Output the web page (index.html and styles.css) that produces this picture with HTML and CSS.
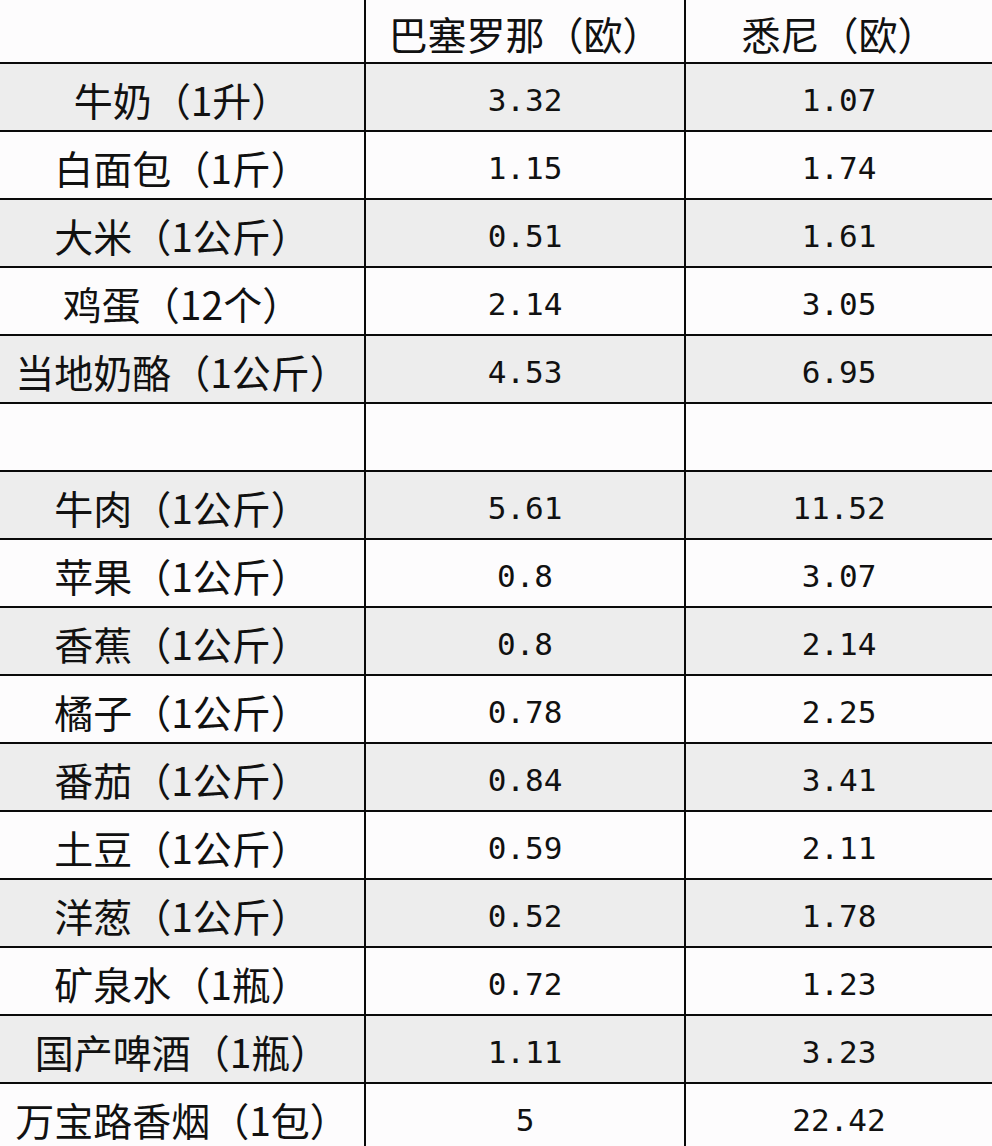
FILE: index.html
```html
<!DOCTYPE html>
<html lang="zh">
<head>
<meta charset="utf-8">
<link rel="stylesheet" href="styles.css">
<title>价格对比</title>
</head>
<body>
<div class="table">
  <div class="row head"><div class="cell c1"></div><div class="cell c2">巴塞罗那（欧）</div><div class="cell c3">悉尼（欧）</div></div>
  <div class="row gray"><div class="cell c1">牛奶（1升）</div><div class="cell c2 num">3.32</div><div class="cell c3 num">1.07</div></div>
  <div class="row"><div class="cell c1">白面包（1斤）</div><div class="cell c2 num">1.15</div><div class="cell c3 num">1.74</div></div>
  <div class="row gray"><div class="cell c1">大米（1公斤）</div><div class="cell c2 num">0.51</div><div class="cell c3 num">1.61</div></div>
  <div class="row"><div class="cell c1">鸡蛋（12个）</div><div class="cell c2 num">2.14</div><div class="cell c3 num">3.05</div></div>
  <div class="row gray"><div class="cell c1">当地奶酪（1公斤）</div><div class="cell c2 num">4.53</div><div class="cell c3 num">6.95</div></div>
  <div class="row"><div class="cell c1"></div><div class="cell c2 num"></div><div class="cell c3 num"></div></div>
  <div class="row gray"><div class="cell c1">牛肉（1公斤）</div><div class="cell c2 num">5.61</div><div class="cell c3 num">11.52</div></div>
  <div class="row"><div class="cell c1">苹果（1公斤）</div><div class="cell c2 num">0.8</div><div class="cell c3 num">3.07</div></div>
  <div class="row gray"><div class="cell c1">香蕉（1公斤）</div><div class="cell c2 num">0.8</div><div class="cell c3 num">2.14</div></div>
  <div class="row"><div class="cell c1">橘子（1公斤）</div><div class="cell c2 num">0.78</div><div class="cell c3 num">2.25</div></div>
  <div class="row gray"><div class="cell c1">番茄（1公斤）</div><div class="cell c2 num">0.84</div><div class="cell c3 num">3.41</div></div>
  <div class="row"><div class="cell c1">土豆（1公斤）</div><div class="cell c2 num">0.59</div><div class="cell c3 num">2.11</div></div>
  <div class="row gray"><div class="cell c1">洋葱（1公斤）</div><div class="cell c2 num">0.52</div><div class="cell c3 num">1.78</div></div>
  <div class="row"><div class="cell c1">矿泉水（1瓶）</div><div class="cell c2 num">0.72</div><div class="cell c3 num">1.23</div></div>
  <div class="row gray"><div class="cell c1">国产啤酒（1瓶）</div><div class="cell c2 num">1.11</div><div class="cell c3 num">3.23</div></div>
  <div class="row"><div class="cell c1">万宝路香烟（1包）</div><div class="cell c2 num">5</div><div class="cell c3 num">22.42</div></div>
</div>
</body>
</html>
```

FILE: styles.css
```css
html, body {
  margin: 0;
  padding: 0;
  background: #fdfcfd;
}
.table {
  width: 992px;
  font-family: "Noto Sans CJK SC", "Noto Sans", sans-serif;
  font-size: 39px;
  color: #111111;
}
.row {
  display: flex;
  height: 66px;
  border-bottom: 2px solid #0a0a0a;
  background: #fdfcfd;
}
.row.head {
  height: 62px;
}
.row.gray {
  background: #ededed;
}
.cell {
  display: flex;
  align-items: center;
  justify-content: center;
  box-sizing: border-box;
  padding-top: 5px;
  white-space: nowrap;
  line-height: 1;
}
.row.head .cell {
  padding-top: 4px;
}
.c1 {
  width: 366px;
  border-right: 2px solid #0a0a0a;
}
.c2 {
  width: 320px;
  border-right: 2px solid #0a0a0a;
}
.c3 {
  width: 306px;
}
.num {
  font-family: "DejaVu Sans Mono", monospace;
  font-size: 31px;
  padding-top: 6px;
}
```
